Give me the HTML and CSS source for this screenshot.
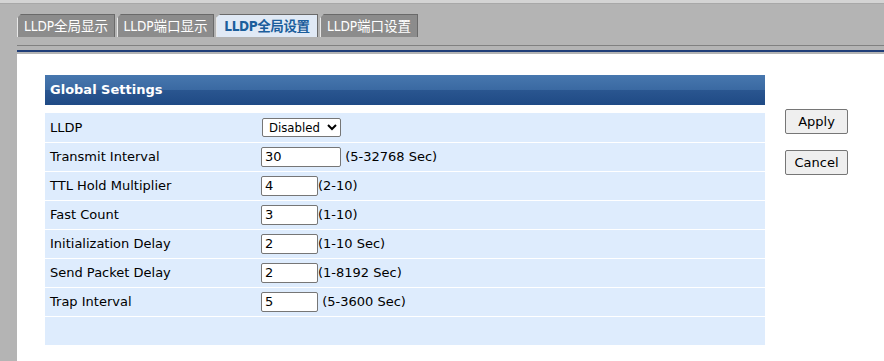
FILE: index.html
```html
<!DOCTYPE html>
<html lang="zh">
<head>
    <meta charset="UTF-8">
    <title>LLDP</title>
    <link rel="stylesheet" href="styles.css">
</head>
<body>
    <div class="topbar"></div>
    <div class="tabs">
        <div class="tab t1">LLDP全局显示</div>
        <div class="tab t2">LLDP端口显示</div>
        <div class="tab t3 active">LLDP全局设置</div>
        <div class="tab t4">LLDP端口设置</div>
    </div>
    <div class="frame">
        <div class="rule"></div>
        <div class="panel">
            <div class="main">
                <div class="head">Global Settings</div>
                <table class="settings">
                    <tr>
                        <td class="label">LLDP</td>
                        <td>
                            <select class="sel">
                                <option>Disabled</option>
                                <option>Enabled</option>
                            </select>
                        </td>
                    </tr>
                    <tr>
                        <td class="label">Transmit Interval</td>
                        <td><input class="txt wide" type="text" value="30"> (5-32768 Sec)</td>
                    </tr>
                    <tr>
                        <td class="label">TTL Hold Multiplier</td>
                        <td><input class="txt" type="text" value="4">(2-10)</td>
                    </tr>
                    <tr>
                        <td class="label">Fast Count</td>
                        <td><input class="txt" type="text" value="3">(1-10)</td>
                    </tr>
                    <tr>
                        <td class="label">Initialization Delay</td>
                        <td><input class="txt" type="text" value="2">(1-10 Sec)</td>
                    </tr>
                    <tr>
                        <td class="label">Send Packet Delay</td>
                        <td><input class="txt" type="text" value="2">(1-8192 Sec)</td>
                    </tr>
                    <tr>
                        <td class="label">Trap Interval</td>
                        <td><input class="txt" type="text" value="5"> (5-3600 Sec)</td>
                    </tr>
                    <tr class="empty">
                        <td></td>
                        <td></td>
                    </tr>
                </table>
            </div>
            <div class="actions">
                <button class="btn">Apply</button>
                <button class="btn">Cancel</button>
            </div>
        </div>
    </div>
</body>
</html>
```

FILE: styles.css
```css
*,*::after,*::before{
    box-sizing: border-box;
}
body{
    margin: 0;
    background-color: #b4b4b4;
    font-family: "DejaVu Sans", "Noto Sans CJK SC", sans-serif;
    font-size: 13px;
    color: #000;
    overflow: hidden;
}
.topbar{
    height: 4px;
    background-color: #d4d4d4;
    border-bottom: 1px solid #a8a8a8;
}
.tabs{
    display: flex;
    gap: 2px;
    padding: 10px 0 0 17px;
}
.tab{
    height: 23px;
    line-height: 22px;
    text-align: center;
    white-space: nowrap;
    background-color: #8c8c8c;
    color: #fff;
    font-family: "DejaVu Sans Condensed", "Noto Sans CJK SC", sans-serif;
    font-size: 13.5px;
    border-top: 1px solid #6a6a6a;
    border-right: 1px solid #6a6a6a;
    border-left: 1px solid #e8e8e8;
    clip-path: polygon(4px 0, 100% 0, 100% 100%, 0 100%, 0 4px);
}
.t1{ width: 98px; }
.t2{ width: 97px; }
.t3{ width: 102px; }
.t4{ width: 98px; }
.tab.active{
    background-color: #e0e9f5;
    color: #1b5e9c;
    font-weight: bold;
    letter-spacing: -0.4px;
}
.frame{
    margin: 8px 0 0 17px;
    border-top: 1px solid #808080;
    padding-top: 4px;
}
.rule{
    height: 2px;
    background-color: #1f3d78;
    margin-bottom: 2px;
}
.panel{
    background-color: #fff;
    height: 320px;
    display: flex;
    padding: 21px 0 0 28px;
}
.main{
    width: 720px;
}
.head{
    height: 30px;
    padding-left: 5px;
    line-height: 30px;
    color: #fff;
    font-weight: bold;
    font-size: 13px;
    background: linear-gradient(to bottom, #4777ae 0%, #3a69a2 50%, #2a5690 50%, #1f4a85 100%);
}
.settings{
    width: 100%;
    margin-top: 8px;
    border-collapse: collapse;
}
.settings tr{
    height: 29px;
    background-color: #deecfd;
    border-bottom: 1px solid #fff;
}
.settings tr:last-child{
    border-bottom: none;
}
.settings td{
    padding: 0;
    vertical-align: middle;
}
.settings .label{
    width: 216px;
    padding-left: 5px;
}
.sel{
    margin-left: 1px;
    width: 79px;
    height: 19px;
    font-family: "DejaVu Sans Condensed", sans-serif;
    font-size: 13px;
    border: 1px solid #767676;
    border-radius: 2px;
    background-color: #fff;
    padding: 0 0 0 2px;
}
.txt{
    width: 57px;
    height: 20px;
    font-family: "DejaVu Sans", sans-serif;
    font-size: 13px;
    border: 1px solid #767676;
    border-radius: 2px;
    padding: 0 3px;
    vertical-align: middle;
}
.txt.wide{
    width: 80px;
}
.actions{
    display: flex;
    flex-direction: column;
    gap: 16px;
    margin: 34px 0 0 20px;
}
.btn{
    width: 63px;
    height: 25px;
    font-family: "DejaVu Sans", sans-serif;
    font-size: 13px;
    color: #000;
    background-color: #efefef;
    border: 1px solid #767676;
    border-radius: 2px;
    padding: 0;
}
```
